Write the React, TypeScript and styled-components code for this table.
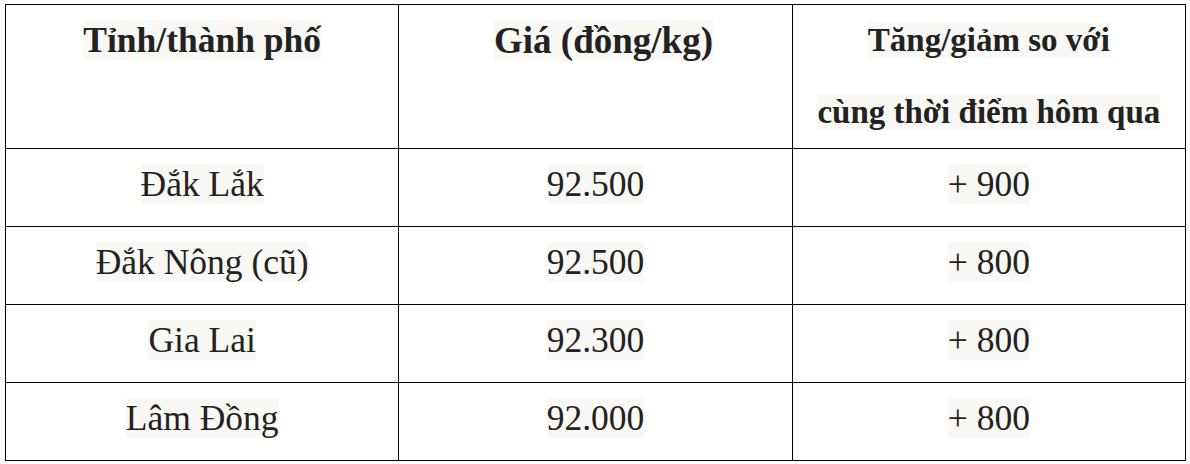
import React from "react";
import styled, { createGlobalStyle } from "styled-components";

const GlobalStyle = createGlobalStyle`
  html, body {
    margin: 0;
    padding: 0;
    background: #ffffff;
  }
`;

const Page = styled.div`
  padding: 4px 0 0 5px;
`;

const Table = styled.table`
  width: 1181px;
  border-collapse: collapse;
  table-layout: fixed;
  font-family: "Liberation Serif", "Times New Roman", serif;
  font-size: 35.5px;
  color: #222222;
`;

const HeadCell = styled.th<{ $shift?: number; $size?: number }>`
  border: 1px solid #000;
  height: 143px;
  padding: 0 0 0 ${(p) => p.$shift ?? 0}px;
  font-size: ${(p) => p.$size ?? 35.5}px;
  font-weight: bold;
  line-height: 71.5px;
  vertical-align: top;
  text-align: center;
`;

const Cell = styled.td`
  border: 1px solid #000;
  height: 78px;
  padding: 0 0 6px;
  box-sizing: border-box;
  text-align: center;
  vertical-align: middle;
  line-height: 1.15;
`;

const Mark = styled.span`
  background: #f9f8f4;
`;

interface PriceRow {
  place: string;
  price: string;
  change: string;
}

const rows: PriceRow[] = [
  { place: "Đắk Lắk", price: "92.500", change: "+ 900" },
  { place: "Đắk Nông (cũ)", price: "92.500", change: "+ 800" },
  { place: "Gia Lai", price: "92.300", change: "+ 800" },
  { place: "Lâm Đồng", price: "92.000", change: "+ 800" },
];

const App = () => (
  <Page>
    <GlobalStyle />
    <Table>
      <thead>
        <tr>
          <HeadCell>
            <Mark>Tỉnh/thành phố</Mark>
          </HeadCell>
          <HeadCell $shift={16} $size={37}>
            <Mark>Giá (đồng/kg)</Mark>
          </HeadCell>
          <HeadCell $size={33}>
            <Mark>Tăng/giảm so với</Mark>
            <br />
            <Mark>cùng thời điểm hôm qua</Mark>
          </HeadCell>
        </tr>
      </thead>
      <tbody>
        {rows.map((r, k) => (
          <tr key={k}>
            <Cell>
              <Mark>{r.place}</Mark>
            </Cell>
            <Cell>
              <Mark>{r.price}</Mark>
            </Cell>
            <Cell>
              <Mark>{r.change}</Mark>
            </Cell>
          </tr>
        ))}
      </tbody>
    </Table>
  </Page>
);

export default App;
